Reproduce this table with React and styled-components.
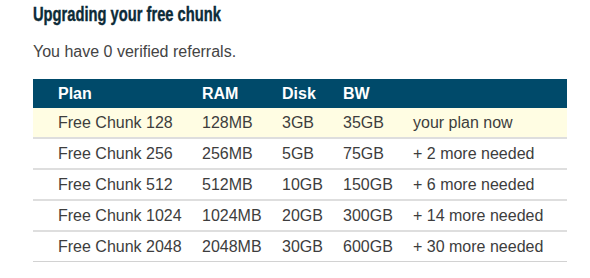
import React from 'react';
import styled, { createGlobalStyle } from 'styled-components';

const GlobalStyle = createGlobalStyle`
  body {
    margin: 0;
    background: #fff;
    font-family: "Liberation Sans", Arial, sans-serif;
  }
`;

const Page = styled.div`
  padding: 3px 23px 0 33px;
  width: 534px;
`;

const Title = styled.h2`
  margin: 0;
  height: 22px;
  font-size: 20px;
  line-height: 22px;
  font-weight: bold;
  color: #0c2b38;
`;

// condensed face stand-in: no narrow family installed
const TitleText = styled.span`
  display: inline-block;
  white-space: nowrap;
  -webkit-text-stroke: 0.4px #0c2b38;
  transform: scaleX(0.735);
  transform-origin: left center;
`;

const Intro = styled.p`
  margin: 18px 0 0;
  font-size: 16px;
  line-height: 18px;
  color: #444;
`;

const Table = styled.table`
  margin-top: 18px;
  width: 534px;
  border-collapse: collapse;
  table-layout: fixed;
  font-size: 16px;
`;

const HeadRow = styled.tr`
  background: #004a6a;
`;

const Th = styled.th`
  height: 29px;
  padding: 0 0 0 ${props => props.first ? '25px' : '0'};
  text-align: left;
  font-weight: bold;
  color: #fff;
`;

const Row = styled.tr`
  background: ${props => props.current ? '#fffde3' : '#fff'};
  border-bottom: ${props => props.last ? '1px solid #d2d2d2' : '2px solid #dedede'};
`;

const Td = styled.td`
  height: 29px;
  padding: 0 0 0 ${props => props.first ? '25px' : '0'};
  color: #3d3d3d;
  white-space: nowrap;
`;

const plans = [
  { name: 'Free Chunk 128', ram: '128MB', disk: '3GB', bw: '35GB', note: 'your plan now' },
  { name: 'Free Chunk 256', ram: '256MB', disk: '5GB', bw: '75GB', note: '+ 2 more needed' },
  { name: 'Free Chunk 512', ram: '512MB', disk: '10GB', bw: '150GB', note: '+ 6 more needed' },
  { name: 'Free Chunk 1024', ram: '1024MB', disk: '20GB', bw: '300GB', note: '+ 14 more needed' },
  { name: 'Free Chunk 2048', ram: '2048MB', disk: '30GB', bw: '600GB', note: '+ 30 more needed' },
];

const App = () => (
  <>
    <GlobalStyle />
    <Page>
      <Title><TitleText>Upgrading your free chunk</TitleText></Title>
      <Intro>You have 0 verified referrals.</Intro>
      <Table>
        <colgroup>
          <col style={{ width: 169 }} />
          <col style={{ width: 80 }} />
          <col style={{ width: 61 }} />
          <col style={{ width: 70 }} />
          <col />
        </colgroup>
        <thead>
          <HeadRow>
            <Th first>Plan</Th>
            <Th>RAM</Th>
            <Th>Disk</Th>
            <Th>BW</Th>
            <Th />
          </HeadRow>
        </thead>
        <tbody>
          {plans.map((p, i) => (
            <Row key={p.name} current={i === 0} last={i === plans.length - 1}>
              <Td first>{p.name}</Td>
              <Td>{p.ram}</Td>
              <Td>{p.disk}</Td>
              <Td>{p.bw}</Td>
              <Td>{p.note}</Td>
            </Row>
          ))}
        </tbody>
      </Table>
    </Page>
  </>
);

export default App;
